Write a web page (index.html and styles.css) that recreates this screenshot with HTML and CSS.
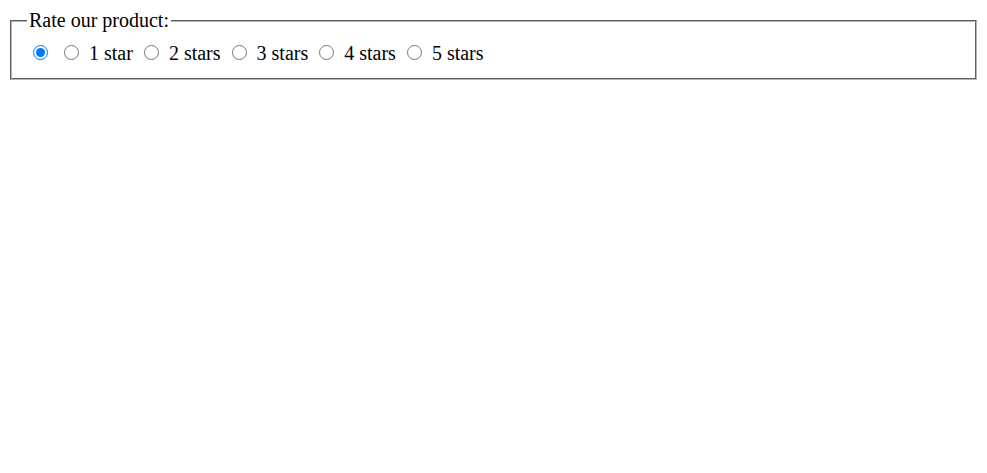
FILE: index.html
```html
<!DOCTYPE html>
<html lang="en">
<head>
	<meta charset="UTF-8">
	<title>Rate our product</title>
	<link rel="stylesheet" href="styles.css">
</head>
<body>
	<form>
		<fieldset class="rating">
			<legend>Rate our product:</legend>
			<input type="radio" name="rating" value="0" checked>
			<label><input type="radio" name="rating" value="1"> 1 star</label>
			<label><input type="radio" name="rating" value="2"> 2 stars</label>
			<label><input type="radio" name="rating" value="3"> 3 stars</label>
			<label><input type="radio" name="rating" value="4"> 4 stars</label>
			<label><input type="radio" name="rating" value="5"> 5 stars</label>
		</fieldset>
	</form>
</body>
</html>
```

FILE: styles.css
```css
body{
	font-family: "Liberation Serif", "Times New Roman", serif;
	font-size: 20px;
	color: #000;
}
form{
	margin: 0;
}
.rating{
	margin: 0 2px;
	padding: 8px 15px 13px;
	border: 2px groove #b4b4b4;
}
.rating legend{
	line-height: 25px;
}
.rating input{
	width: 15px;
	height: 15px;
	margin: 4px 5px 0 6px;
}
```
